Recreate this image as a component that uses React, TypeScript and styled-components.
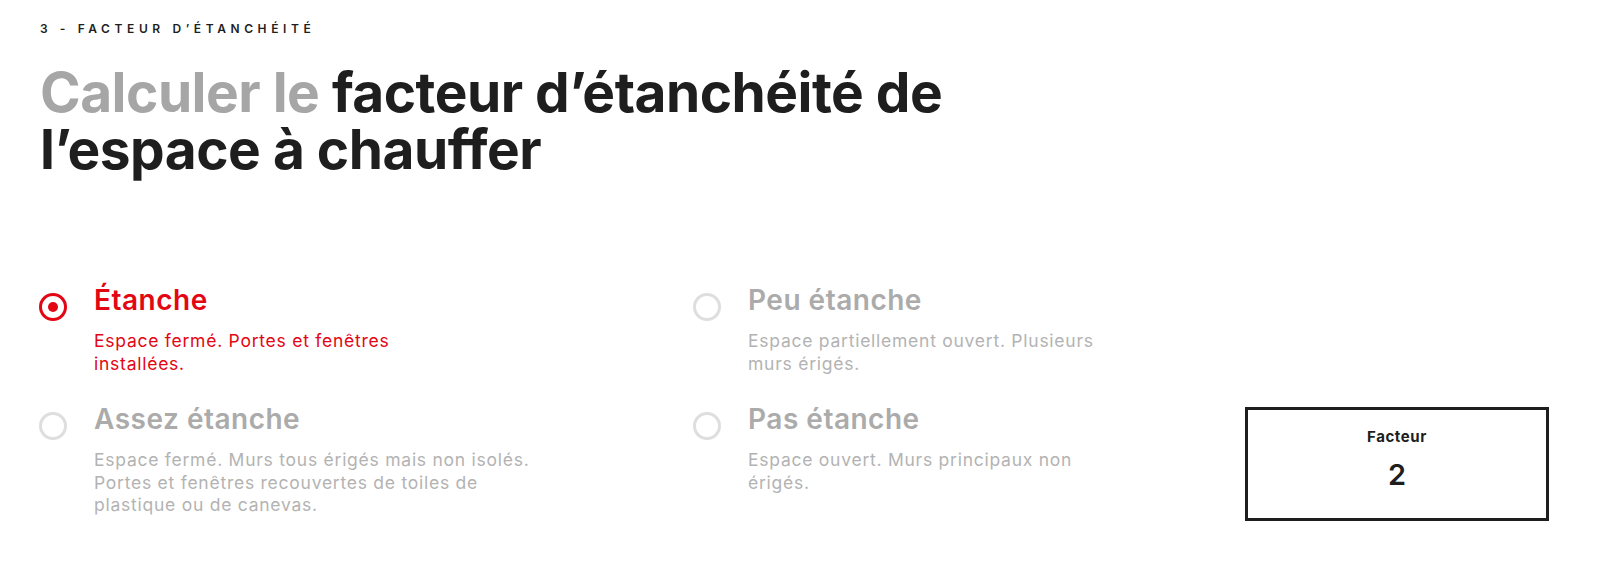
import React from "react";
import styled, { createGlobalStyle } from "styled-components";

const Global = createGlobalStyle`
  body { margin: 0; background: #fff; font-family: Inter, "Liberation Sans", sans-serif; color: #1e1e1e; }
`;

const Page = styled.div`
  padding: 21px 0 40px 40px;
`;

const Eyebrow = styled.div`
  font-size: 12px;
  line-height: 16px;
  font-weight: 600;
  letter-spacing: 4.6px;
  text-transform: uppercase;
`;

const Title = styled.h1`
  margin: 27px 0 0;
  font-size: 55px;
  line-height: 57px;
  font-weight: 700;
  letter-spacing: -0.5px;
`;

const Muted = styled.span`
  color: #a6a6a6;
`;

const Grid = styled.div`
  display: grid;
  grid-template-columns: 654px 1fr 304px;
  grid-template-areas:
    "a b ."
    "c d f";
  row-gap: 28px;
  margin: 106px 51px 0 -1px;
`;

const Option = styled.label<{ $area: string; $on?: boolean }>`
  grid-area: ${(p) => p.$area};
  display: grid;
  grid-template-columns: 28px 1fr;
  column-gap: 27px;
  align-items: start;
  color: ${(p) => (p.$on ? "#e30613" : "#ababab")};
  cursor: pointer;
`;

const Radio = styled.span<{ $on?: boolean }>`
  box-sizing: border-box;
  width: 28px;
  height: 28px;
  margin-top: 9px;
  border-radius: 50%;
  border: ${(p) => (p.$on ? "3.5px solid #e30613" : "3px solid #dedede")};
  display: flex;
  align-items: center;
  justify-content: center;
  &::after {
    content: "";
    width: 10px;
    height: 10px;
    border-radius: 50%;
    background: #e30613;
    display: ${(p) => (p.$on ? "block" : "none")};
  }
`;

const Name = styled.div`
  font-size: 28px;
  line-height: 32px;
  font-weight: 600;
  letter-spacing: 0.5px;
`;

const Desc = styled.p<{ $on?: boolean }>`
  margin: 14px 0 0;
  font-size: 17.5px;
  line-height: 22.5px;
  letter-spacing: 0.75px;
  color: ${(p) => (p.$on ? "#e30613" : "#b3b3b3")};
`;

const FactorBox = styled.div`
  grid-area: f;
  margin-top: 4px;
  height: 114px;
  box-sizing: border-box;
  border: 3px solid #1e1e1e;
  padding-top: 17px;
  text-align: center;
`;

const FactorLabel = styled.div`
  font-size: 15px;
  line-height: 19px;
  font-weight: 700;
  letter-spacing: 0.6px;
`;

const FactorValue = styled.div`
  margin-top: 12px;
  font-size: 29px;
  line-height: 34px;
  font-weight: 600;
`;

const options = [
  { area: "a", name: "Étanche", lines: ["Espace fermé. Portes et fenêtres", "installées."], on: true },
  { area: "b", name: "Peu étanche", lines: ["Espace partiellement ouvert. Plusieurs", "murs érigés."] },
  {
    area: "c",
    name: "Assez étanche",
    lines: ["Espace fermé. Murs tous érigés mais non isolés.", "Portes et fenêtres recouvertes de toiles de", "plastique ou de canevas."],
  },
  { area: "d", name: "Pas étanche", lines: ["Espace ouvert. Murs principaux non", "érigés."] },
];

export default function App() {
  return (
    <Page>
      <Global />
      <Eyebrow>3 - Facteur d’étanchéité</Eyebrow>
      <Title>
        <Muted>Calculer le</Muted> facteur d’étanchéité de
        <br />
        l’espace à chauffer
      </Title>
      <Grid>
        {options.map((o) => (
          <Option key={o.area} $area={o.area} $on={o.on}>
            <Radio $on={o.on} />
            <div>
              <Name>{o.name}</Name>
              <Desc $on={o.on}>
                {o.lines.map((l, i) => (
                  <React.Fragment key={i}>
                    {i > 0 && <br />}
                    {l}
                  </React.Fragment>
                ))}
              </Desc>
            </div>
          </Option>
        ))}
        <FactorBox>
          <FactorLabel>Facteur</FactorLabel>
          <FactorValue>2</FactorValue>
        </FactorBox>
      </Grid>
    </Page>
  );
}
